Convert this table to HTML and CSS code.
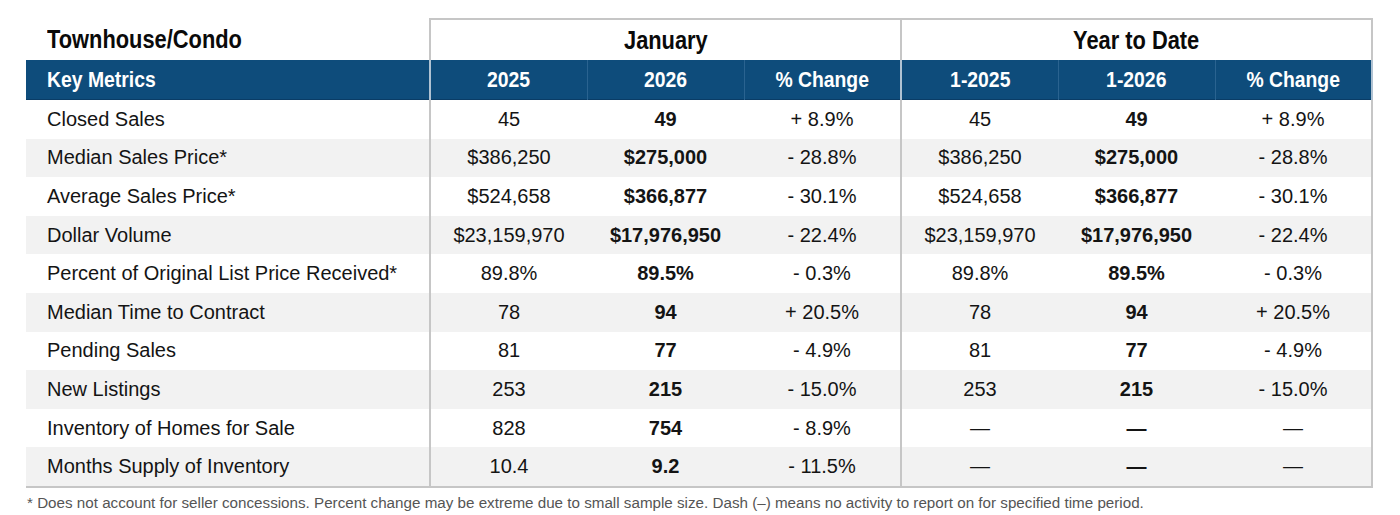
FILE: index.html
```html
<!DOCTYPE html>
<html lang="en">
<head>
<meta charset="utf-8">
<title>Townhouse/Condo Key Metrics</title>
<link rel="stylesheet" href="styles.css">
</head>
<body>
<div class="page">
<table class="metrics">
  <colgroup>
    <col class="c-label">
    <col class="c-num"><col class="c-num"><col class="c-num">
    <col class="c-num"><col class="c-num"><col class="c-num">
  </colgroup>
  <thead>
    <tr class="period-row">
      <th class="title"><span class="cond">Townhouse/Condo</span></th>
      <th class="period" colspan="3"><span class="cond">January</span></th>
      <th class="period" colspan="3"><span class="cond">Year to Date</span></th>
    </tr>
    <tr class="head-row">
      <th class="head-label"><span class="cond">Key Metrics</span></th>
      <th class="major"><span class="cond">2025</span></th>
      <th class="minor"><span class="cond">2026</span></th>
      <th class="minor"><span class="cond">% Change</span></th>
      <th class="major"><span class="cond">1-2025</span></th>
      <th class="minor"><span class="cond">1-2026</span></th>
      <th class="minor last"><span class="cond">% Change</span></th>
    </tr>
  </thead>
  <tbody>
    <tr><td class="label">Closed Sales</td><td class="major">45</td><td class="b">49</td><td>+ 8.9%</td><td class="major">45</td><td class="b">49</td><td class="last">+ 8.9%</td></tr>
    <tr><td class="label">Median Sales Price*</td><td class="major">$386,250</td><td class="b">$275,000</td><td>- 28.8%</td><td class="major">$386,250</td><td class="b">$275,000</td><td class="last">- 28.8%</td></tr>
    <tr><td class="label">Average Sales Price*</td><td class="major">$524,658</td><td class="b">$366,877</td><td>- 30.1%</td><td class="major">$524,658</td><td class="b">$366,877</td><td class="last">- 30.1%</td></tr>
    <tr><td class="label">Dollar Volume</td><td class="major">$23,159,970</td><td class="b">$17,976,950</td><td>- 22.4%</td><td class="major">$23,159,970</td><td class="b">$17,976,950</td><td class="last">- 22.4%</td></tr>
    <tr><td class="label">Percent of Original List Price Received*</td><td class="major">89.8%</td><td class="b">89.5%</td><td>- 0.3%</td><td class="major">89.8%</td><td class="b">89.5%</td><td class="last">- 0.3%</td></tr>
    <tr><td class="label">Median Time to Contract</td><td class="major">78</td><td class="b">94</td><td>+ 20.5%</td><td class="major">78</td><td class="b">94</td><td class="last">+ 20.5%</td></tr>
    <tr><td class="label">Pending Sales</td><td class="major">81</td><td class="b">77</td><td>- 4.9%</td><td class="major">81</td><td class="b">77</td><td class="last">- 4.9%</td></tr>
    <tr><td class="label">New Listings</td><td class="major">253</td><td class="b">215</td><td>- 15.0%</td><td class="major">253</td><td class="b">215</td><td class="last">- 15.0%</td></tr>
    <tr><td class="label">Inventory of Homes for Sale</td><td class="major">828</td><td class="b">754</td><td>- 8.9%</td><td class="major">&mdash;</td><td class="b">&mdash;</td><td class="last">&mdash;</td></tr>
    <tr><td class="label">Months Supply of Inventory</td><td class="major">10.4</td><td class="b">9.2</td><td>- 11.5%</td><td class="major">&mdash;</td><td class="b">&mdash;</td><td class="last">&mdash;</td></tr>
  </tbody>
</table>
<p class="note">* Does not account for seller concessions. Percent change may be extreme due to small sample size. Dash (&ndash;) means no activity to report on for specified time period.</p>
</div>
</body>
</html>
```

FILE: styles.css
```css
html, body {
  margin: 0;
  padding: 0;
  background: #ffffff;
}

.page {
  padding: 18px 0 0 26px;
  width: 1346px;
}

.metrics {
  width: 1347px;
  border-collapse: collapse;
  table-layout: fixed;
  font-family: "Liberation Sans", Arial, sans-serif;
  font-size: 20px;
  color: #141414;
}

.c-label { width: 404px; }
.c-num { width: 157px; }

.metrics th {
  font-family: "Liberation Sans", Arial, sans-serif;
  font-weight: bold;
  padding: 0;
  white-space: nowrap;
}

.cond {
  display: inline-block;
  transform: scaleX(0.88);
  transform-origin: center;
}

.period-row th {
  height: 40px;
  font-size: 26px;
  color: #0a0a0a;
  text-align: center;
  border-top: 2px solid #c6c6c6;
  border-left: 2px solid #c6c6c6;
  border-right: 2px solid #c6c6c6;
}

.period-row .cond {
  transform: scaleX(0.84);
}

.period-row th.title {
  text-align: left;
  padding-left: 21px;
  border: none;
}

.head-row th {
  height: 40px;
  background: #0e4c7b;
  color: #ffffff;
  font-size: 22px;
  text-align: center;
  border-left: 1px solid #2a6390;
  box-shadow: inset 0 -1px 0 #0a3c66;
}

.head-row th.head-label {
  text-align: left;
  padding-left: 21px;
  border-left: none;
}

.period-row th.title .cond,
.head-row th.head-label .cond {
  transform-origin: left center;
}

.head-row th.major {
  border-left: 2px solid #b0c2d2;
}

.head-row th.last {
  border-right: 2px solid #b0c2d2;
}

.metrics td {
  height: 38.6px;
  padding: 0;
  text-align: center;
  white-space: nowrap;
}

.metrics td.label {
  text-align: left;
  padding-left: 21px;
}

.metrics td.major {
  border-left: 2px solid #c6c6c6;
}

.metrics td.last {
  border-right: 2px solid #c6c6c6;
}

.metrics td.b {
  font-weight: bold;
}

.metrics tbody tr:nth-child(even) td {
  background: #f2f2f2;
}

.metrics tbody tr:last-child td {
  border-bottom: 2px solid #c6c6c6;
}

.note {
  margin: 6px 0 0 1px;
  font-family: "Liberation Sans", Arial, sans-serif;
  font-size: 15.2px;
  color: #555555;
  white-space: nowrap;
}
```
